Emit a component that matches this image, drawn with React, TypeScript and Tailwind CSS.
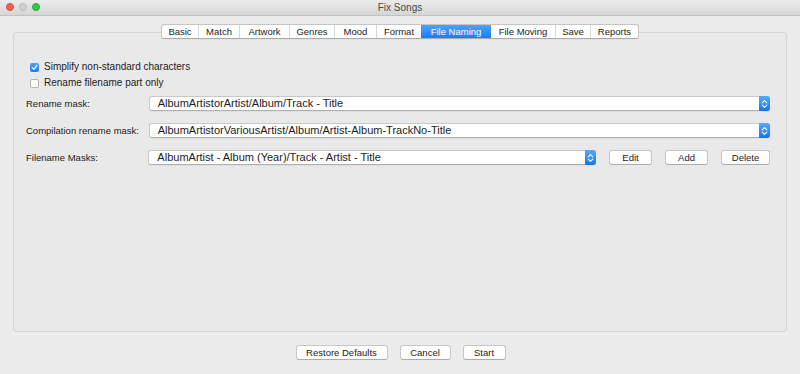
import React from "react";

const tabs: { label: string; w: string; active?: boolean }[] = [
  { label: "Basic", w: "w-[36px]" },
  { label: "Match", w: "w-[41px]" },
  { label: "Artwork", w: "w-[50px]" },
  { label: "Genres", w: "w-[45px]" },
  { label: "Mood", w: "w-[42px]" },
  { label: "Format", w: "w-[45px]" },
  { label: "File Naming", w: "w-[70px]", active: true },
  { label: "File Moving", w: "w-[64px]" },
  { label: "Save", w: "w-[35px]" },
  { label: "Reports", w: "w-[48px]" },
];

function Arrows() {
  return (
    <svg width="7" height="10" viewBox="0 0 7 10" fill="none">
      <path d="M1.2 3.8 L3.5 1.6 L5.8 3.8" stroke="white" strokeWidth="1.1" strokeLinecap="round" strokeLinejoin="round" />
      <path d="M1.2 6.2 L3.5 8.4 L5.8 6.2" stroke="white" strokeWidth="1.1" strokeLinecap="round" strokeLinejoin="round" />
    </svg>
  );
}

function Combo({ text, w }: { text: string; w: string }) {
  return (
    <div className={`${w} h-[15px] flex items-stretch bg-white rounded-[3px] border border-[#c8c8c8] border-b-[#b0b0b0] shadow-[0_0.5px_0_rgba(0,0,0,0.08)]`}>
      <div className="flex-1 pl-[8px] flex items-center text-[11px] text-[#1c1c1c] leading-none">{text}</div>
      <div className="w-[11px] -my-px -mr-px rounded-r-[3px] bg-gradient-to-b from-[#55a9fc] to-[#1273f2] flex items-center justify-center">
        <Arrows />
      </div>
    </div>
  );
}

function Btn({ label, w }: { label: string; w: string }) {
  return (
    <div className={`${w} h-[15px] bg-white rounded-[3px] border border-[#c6c6c6] border-b-[#ababab] flex items-center justify-center text-[9.5px] text-[#1c1c1c] leading-none`}>
      {label}
    </div>
  );
}

export default function App() {
  return (
    <div
      className="w-[800px] h-[374px] bg-[#ececec] flex flex-col overflow-hidden"
      style={{ fontFamily: '"Liberation Sans", Arial, sans-serif' }}
    >
      {/* Title bar */}
      <div className="h-[16px] shrink-0 relative flex items-center justify-center bg-gradient-to-b from-[#ebebeb] to-[#d5d5d5] border-b border-[#c2c2c2]">
        <div className="absolute left-[6px] top-[3px] flex gap-[5px]">
          <div className="w-[8px] h-[8px] rounded-full bg-[#fc5f57] border border-[#e0443e]" />
          <div className="w-[8px] h-[8px] rounded-full bg-[#cfcfcf] border border-[#bdbdbd]" />
          <div className="w-[8px] h-[8px] rounded-full bg-[#33c748] border border-[#1eab31]" />
        </div>
        <span className="text-[10px] text-[#4a4a4a] leading-none">Fix Songs</span>
      </div>

      {/* Tabs + panel */}
      <div className="px-[13px] pt-[8px] flex flex-col">
        <div className="relative z-10 flex justify-center">
          <div className="flex h-[15px] rounded-[3px] border border-[#c4c4c4] border-b-[#ababab] bg-white overflow-hidden shadow-[0_0.5px_0_rgba(0,0,0,0.06)]">
            {tabs.map((t, i) => (
              <div
                key={t.label}
                className={`${t.w} flex items-center justify-center text-[9.5px] leading-none ${
                  t.active
                    ? "bg-gradient-to-b from-[#4ba3fc] to-[#1a7cf5] text-white"
                    : "text-[#1c1c1c]"
                } ${i > 0 && !t.active && !tabs[i - 1].active ? "border-l border-[#d6d6d6]" : ""}`}
              >
                {t.label}
              </div>
            ))}
          </div>
        </div>
        <div className="-mt-[7px] h-[300px] rounded-[3px] border border-[#d7d7d7] bg-[#e9e9e9] flex flex-col pt-[26px] pl-[16px] pr-[16px]">
          <div className="flex flex-col">
            <div className="h-[16px] flex items-center gap-[5px]">
              <div className="w-[9px] h-[9px] rounded-[2px] bg-gradient-to-b from-[#4ba3fc] to-[#1a7cf5] flex items-center justify-center">
                <svg width="7" height="7" viewBox="0 0 7 7" fill="none">
                  <path d="M1.2 3.7 L2.9 5.4 L5.9 1.3" stroke="white" strokeWidth="1.2" strokeLinecap="round" strokeLinejoin="round" />
                </svg>
              </div>
              <span className="text-[10px] text-[#1c1c1c] leading-none">Simplify non-standard characters</span>
            </div>
            <div className="h-[16px] flex items-center gap-[5px]">
              <div className="w-[9px] h-[9px] rounded-[2px] bg-white border border-[#b5b5b5]" />
              <span className="text-[10px] text-[#1c1c1c] leading-none">Rename filename part only</span>
            </div>
          </div>

          <div className="mt-[5px] -ml-[4px] flex flex-col gap-[12px]">
            <div className="flex items-center">
              <div className="w-[123px] text-[9.5px] text-[#1c1c1c] leading-none">Rename mask:</div>
              <Combo w="w-[623px]" text="AlbumArtistorArtist/Album/Track - Title" />
            </div>
            <div className="flex items-center">
              <div className="w-[123px] text-[9.5px] text-[#1c1c1c] leading-none">Compilation rename mask:</div>
              <Combo w="w-[623px]" text="AlbumArtistorVariousArtist/Album/Artist-Album-TrackNo-Title" />
            </div>
            <div className="flex items-center">
              <div className="w-[123px] text-[9.5px] text-[#1c1c1c] leading-none">Filename Masks:</div>
              <Combo w="w-[450px]" text="AlbumArtist - Album (Year)/Track - Artist - Title" />
              <div className="ml-[13px] flex gap-[13px]">
                <Btn label="Edit" w="w-[43px]" />
                <Btn label="Add" w="w-[43px]" />
                <Btn label="Delete" w="w-[49px]" />
              </div>
            </div>
          </div>
        </div>
      </div>

      {/* Bottom buttons */}
      <div className="mt-[13px] flex justify-center gap-[12px] pl-[1px]">
        <Btn label="Restore Defaults" w="w-[92px]" />
        <Btn label="Cancel" w="w-[51px]" />
        <Btn label="Start" w="w-[43px]" />
      </div>
    </div>
  );
}
